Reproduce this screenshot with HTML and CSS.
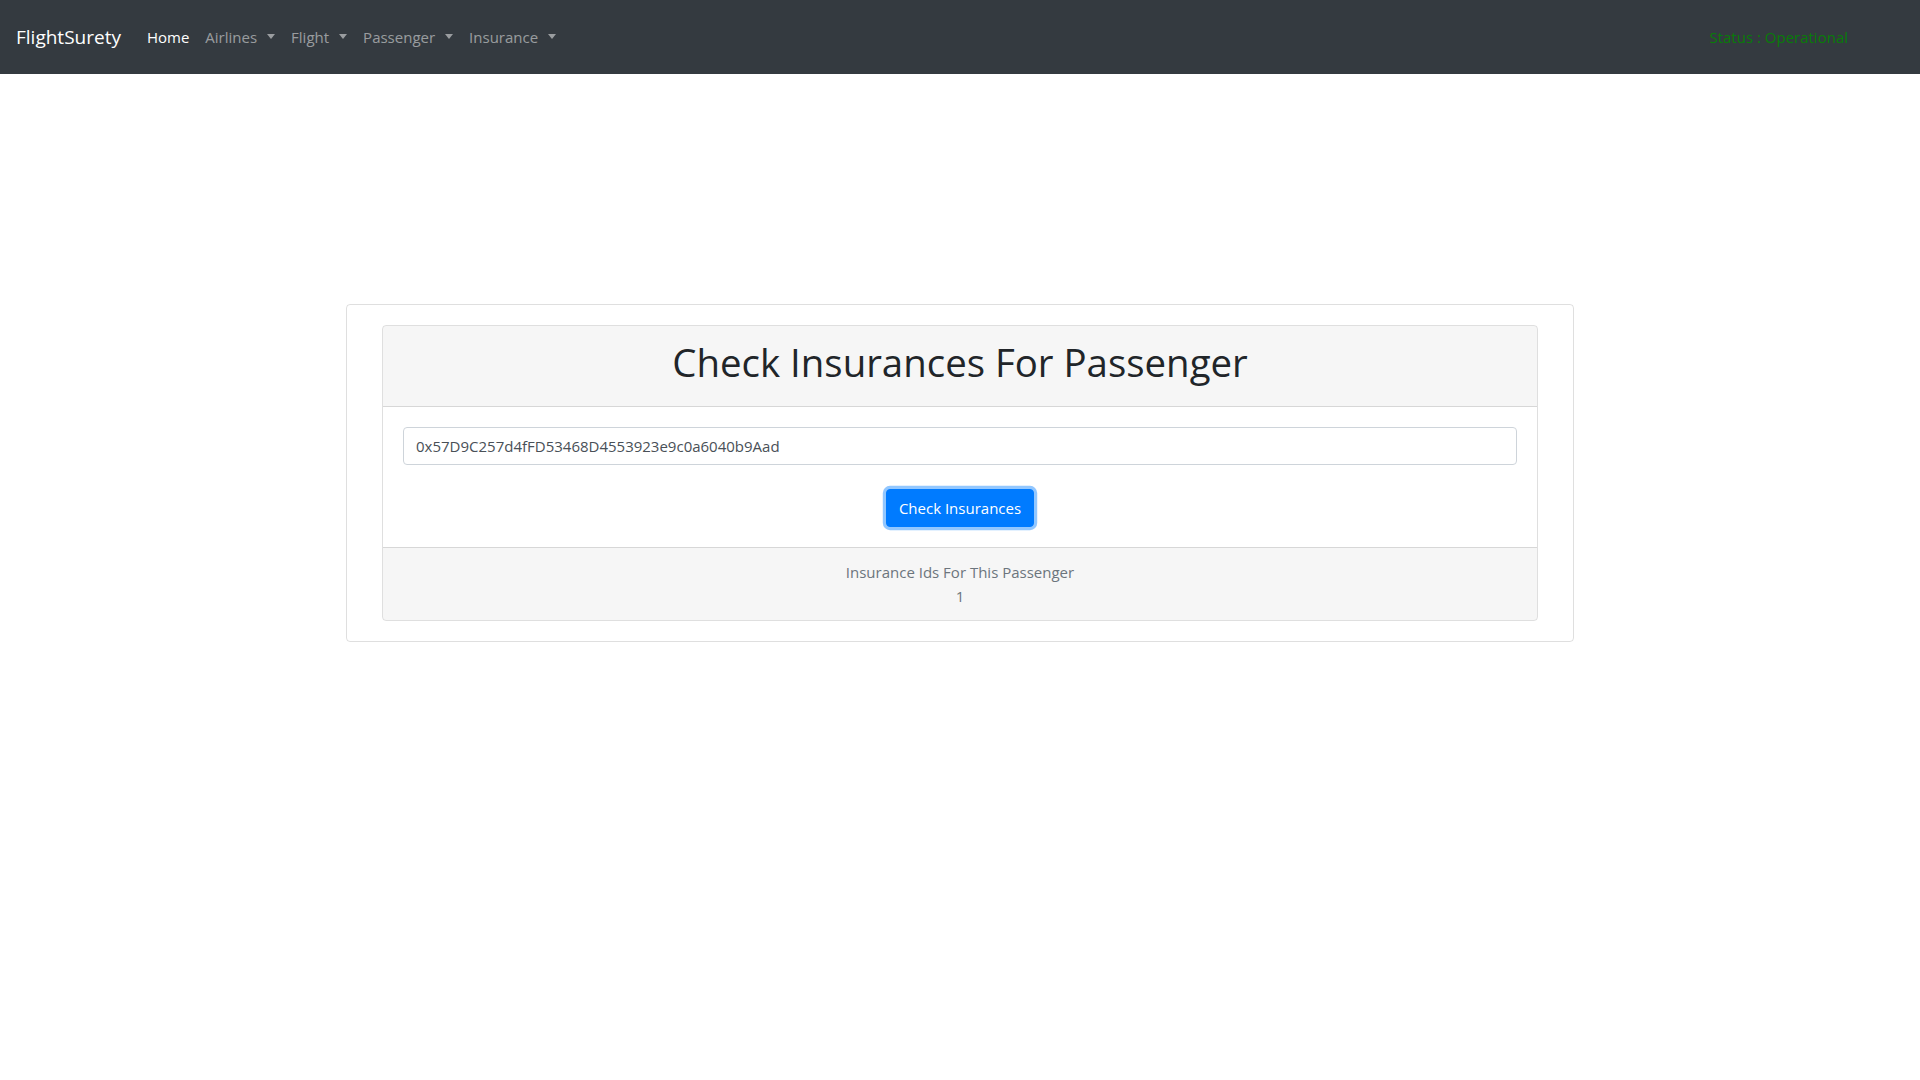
FILE: index.html
```html
<!DOCTYPE html>
<html lang="en">
<head>
<meta charset="utf-8">
<title>FlightSurety</title>
<link rel="stylesheet" href="styles.css">
</head>
<body>
<nav class="navbar">
  <a class="brand" href="#">FlightSurety</a>
  <ul class="nav">
    <li><a class="nav-link active" href="#">Home</a></li>
    <li><a class="nav-link toggle" href="#">Airlines</a></li>
    <li><a class="nav-link toggle" href="#">Flight</a></li>
    <li><a class="nav-link toggle" href="#">Passenger</a></li>
    <li><a class="nav-link toggle" href="#">Insurance</a></li>
  </ul>
  <span class="status">Status : Operational</span>
</nav>
<main class="main">
  <div class="outer-card">
    <div class="card">
      <div class="card-header">
        <h1 class="title">Check Insurances For Passenger</h1>
      </div>
      <div class="card-body">
        <input class="form-control" type="text" value="0x57D9C257d4fFD53468D4553923e9c0a6040b9Aad">
        <div class="btn-row">
          <button class="btn" type="button">Check Insurances</button>
        </div>
      </div>
      <div class="card-footer">
        <div>Insurance Ids For This Passenger</div>
        <div>1</div>
      </div>
    </div>
  </div>
</main>
</body>
</html>
```
FILE: styles.css
```css
* { box-sizing: border-box; }
html, body { margin: 0; padding: 0; }
body {
  font-family: "Open Sans", "Noto Sans", sans-serif;
  font-size: 15px;
  line-height: 24px;
  color: #212529;
  background: #fff;
}
.navbar {
  height: 74px;
  background: #343a40;
  display: flex;
  align-items: center;
  padding: 0 16px;
}
.brand {
  color: #fff;
  font-size: 19px;
  line-height: 30px;
  text-decoration: none;
  margin-right: 18px;
}
.nav {
  list-style: none;
  margin: 0;
  padding: 0;
  display: flex;
}
.nav-link {
  display: block;
  padding: 8px;
  color: rgba(255,255,255,.5);
  text-decoration: none;
}
.nav-link.active { color: #fff; }
.toggle::after {
  content: "";
  display: inline-block;
  margin-left: 10px;
  vertical-align: 4px;
  border-top: 5px solid;
  border-right: 4.5px solid transparent;
  border-left: 4.5px solid transparent;
  border-bottom: 0;
}
.status {
  margin-left: auto;
  margin-right: 56px;
  color: #087c08;
}
.main {
  padding-top: 230px;
}
.outer-card {
  width: 1228px;
  margin: 0 auto;
  border: 1px solid rgba(0,0,0,.125);
  border-radius: 4px;
  padding: 20px 35px;
}
.card {
  border: 1px solid rgba(0,0,0,.125);
  border-radius: 4px;
  overflow: hidden;
}
.card-header {
  background: rgba(0,0,0,.035);
  border-bottom: 1px solid rgba(0,0,0,.125);
  padding: 12px 20px;
  text-align: center;
}
.title {
  margin: 0 0 8px;
  font-size: 38.4px;
  line-height: 48px;
  font-weight: 500;
  color: #212529;
}
.card-body {
  padding: 20px;
}
.form-control {
  display: block;
  width: 100%;
  height: 38px;
  padding: 6px 12px;
  font-family: inherit;
  font-size: 15px;
  line-height: 24px;
  color: #495057;
  background: #fff;
  border: 1px solid #ced4da;
  border-radius: 4px;
}
.btn-row {
  display: flex;
  justify-content: center;
  margin-top: 24px;
}
.btn {
  font-family: inherit;
  font-size: 15px;
  line-height: 24px;
  padding: 6px 12px;
  color: #fff;
  background: #007bff;
  border: 1px solid #007bff;
  border-radius: 4px;
  box-shadow: 0 0 0 3.2px rgba(38,143,255,.5);
  cursor: pointer;
}
.card-footer {
  background: rgba(0,0,0,.035);
  border-top: 1px solid rgba(0,0,0,.125);
  padding: 12px 20px;
  text-align: center;
  color: #6c757d;
}
```
